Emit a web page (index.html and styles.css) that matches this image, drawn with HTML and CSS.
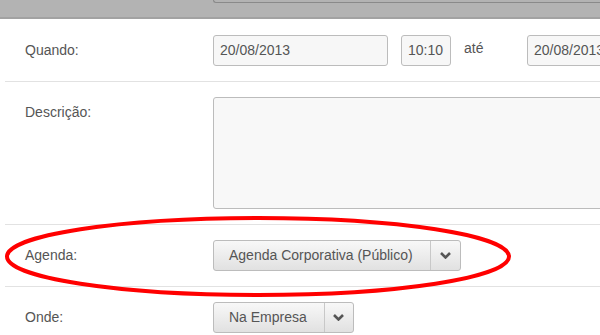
FILE: index.html
```html
<!DOCTYPE html>
<html lang="pt">
<head>
<meta charset="utf-8">
<link rel="stylesheet" href="styles.css">
</head>
<body>
<div class="topbar"><div class="topbox"></div></div>
<div class="form">
  <div class="row">
    <div class="label">Quando:</div>
    <div class="fields">
      <div class="input date">20/08/2013</div>
      <div class="input time">10:10</div>
      <div class="ate">até</div>
      <div class="input date">20/08/2013</div>
    </div>
  </div>
  <div class="row">
    <div class="label">Descrição:</div>
    <div class="textarea"></div>
  </div>
  <div class="row">
    <div class="label">Agenda:</div>
    <div class="btn-group">
      <div class="btn-main">Agenda Corporativa (Público)</div>
      <div class="btn-caret"><svg width="11" height="7" viewBox="0 0 11 7"><polyline points="1,1 5.5,5.5 10,1" fill="none" stroke="#555" stroke-width="2.6"/></svg></div>
    </div>
  </div>
  <div class="row">
    <div class="label">Onde:</div>
    <div class="btn-group">
      <div class="btn-main">Na Empresa</div>
      <div class="btn-caret narrow"><svg width="11" height="7" viewBox="0 0 11 7"><polyline points="1,1 5.5,5.5 10,1" fill="none" stroke="#555" stroke-width="2.6"/></svg></div>
    </div>
  </div>
</div>
<svg class="mark" width="600" height="335" viewBox="0 0 600 335"><ellipse cx="258" cy="256.5" rx="251" ry="38.5" fill="none" stroke="#f00" stroke-width="4"/></svg>
</body>
</html>
```
FILE: styles.css
```css
html, body {
  margin: 0;
  padding: 0;
}
body {
  width: 600px;
  height: 335px;
  overflow: hidden;
  position: relative;
  background: #fff;
  font-family: "Liberation Sans", Arial, sans-serif;
  font-size: 14px;
  color: #555;
}
.topbar {
  height: 17px;
  background: #b3b3b3;
  border-bottom: 2px solid #a2a2a2;
  padding-left: 213px;
  margin-bottom: 1px;
}
.topbox {
  height: 2px;
  border-left: 1px solid #8a8a8a;
  border-bottom: 1px solid #8a8a8a;
  border-bottom-left-radius: 4px;
}
.form {
  margin-left: 5px;
}
.row {
  display: flex;
  align-items: flex-start;
  padding: 15px 0 15px 20px;
  border-bottom: 1px solid #e2e2e2;
}
.label {
  width: 188px;
  flex: none;
  line-height: 31px;
}
.fields {
  display: flex;
  align-items: flex-start;
  white-space: nowrap;
  height: 31px;
}
.input {
  box-sizing: border-box;
  height: 31px;
  line-height: 29px;
  padding: 0 6px;
  background: #f7f7f7;
  border: 1px solid #bcbcbc;
  border-radius: 3px;
  flex: none;
}
.date {
  width: 175px;
}
.time {
  width: 50px;
  margin-left: 13px;
}
.ate {
  margin-left: 13px;
  width: 63px;
  line-height: 27px;
}
.textarea {
  box-sizing: border-box;
  width: 420px;
  height: 112px;
  background: #f8f8f8;
  border: 1px solid #bcbcbc;
  border-radius: 3px;
  flex: none;
}
.btn-group {
  display: flex;
  height: 31px;
  box-sizing: border-box;
  border: 1px solid #bcbcbc;
  border-radius: 3px;
  background: linear-gradient(#f8f8f8, #e1e1e1);
  overflow: hidden;
}
.btn-main {
  padding: 0 17px 0 15px;
  line-height: 29px;
  border-right: 1px solid #c8c8c8;
}
.btn-caret {
  width: 29px;
  display: flex;
  align-items: center;
  justify-content: center;
}
.btn-caret.narrow {
  width: 28px;
}
.mark {
  position: absolute;
  left: 0;
  top: 0;
  pointer-events: none;
}
```
